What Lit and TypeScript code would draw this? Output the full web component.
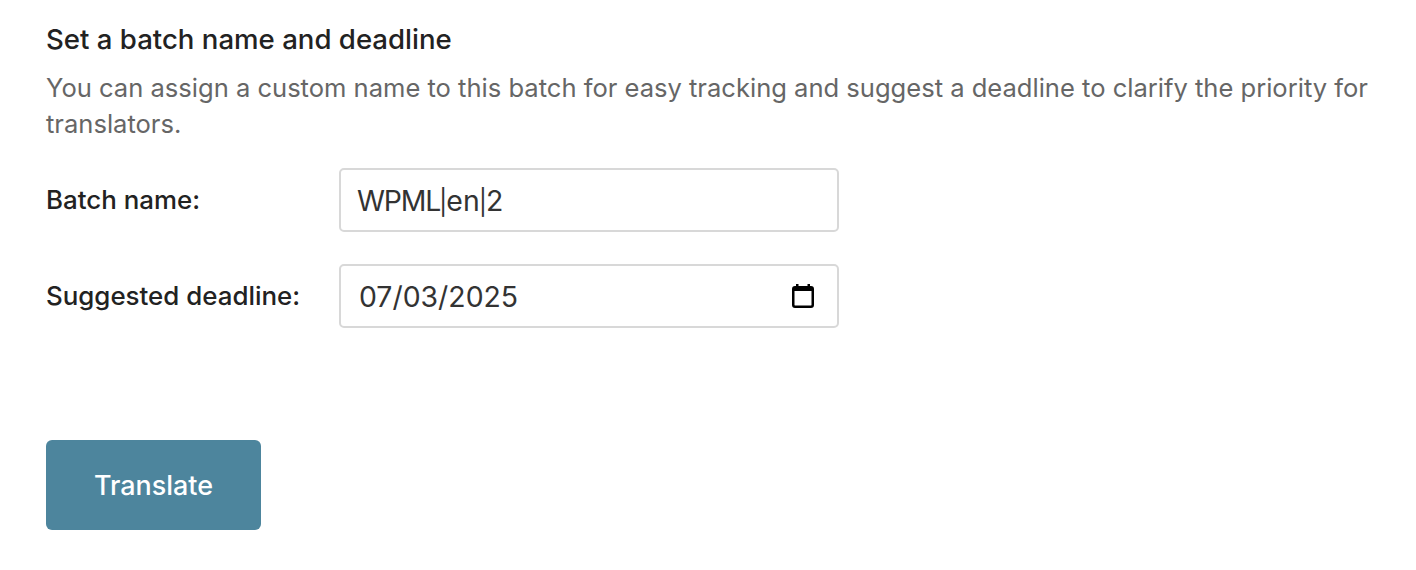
import { LitElement, html, css } from "lit";
import { customElement } from "lit/decorators.js";

@customElement("app-root")
export class AppRoot extends LitElement {
  static styles = css`
    :host {
      display: block;
      width: 1416px;
      height: 570px;
      background: #fff;
      box-sizing: border-box;
      padding: 24px 46px 0;
      font-family: Inter, "Liberation Sans", sans-serif;
      color: #222;
    }
    h2 {
      margin: 0;
      font-size: 27.6px;
      line-height: 30px;
      font-weight: 500;
      color: #222;
    }
    .desc {
      margin: 16px 0 0;
      font-size: 25.55px;
      line-height: 36px;
      color: #666;
    }
    .rows {
      display: grid;
      grid-template-columns: 293px 500px;
      row-gap: 32px;
      margin-top: 26px;
      align-items: center;
    }
    label {
      font-size: 25.9px;
      font-weight: 500;
      color: #222;
      padding-bottom: 2px;
    }
    .field {
      box-sizing: border-box;
      height: 64px;
      border: 2px solid #d8d8d8;
      border-radius: 5px;
      display: flex;
      align-items: center;
      justify-content: space-between;
      padding: 0 23px 0 18px;
      font-size: 28.4px;
      color: #333;
    }
    .name { margin-left: -2px; }
    .caps { letter-spacing: -1.2px; }
    .pipe { margin: 0 -1px; font-size: 25px; }
    svg {
      width: 22px;
      height: 24px;
      display: block;
    }
    button {
      display: block;
      margin-top: 112px;
      width: 215px;
      height: 90px;
      border: 0;
      border-radius: 6px;
      background: #4d859d;
      color: #fff;
      font: 500 26.9px Inter, "Liberation Sans", sans-serif;
    }
  `;
  render() {
    return html`
      <h2>Set a batch name and deadline</h2>
      <p class="desc">You can assign a custom name to this batch for easy tracking and suggest a deadline to clarify the priority for translators.</p>
      <div class="rows">
        <label>Batch name:</label>
        <div class="field"><span class="name"><span class="caps">WPML</span><span class="pipe">|</span>en<span class="pipe">|</span>2</span></div>
        <label>Suggested deadline:</label>
        <div class="field">
          <span>07/03/2025</span>
          <svg viewBox="0 0 22 24" fill="#000"><path fill-rule="evenodd" d="M4 2V0h2.5v2h9V0H18v2h1a3 3 0 0 1 3 3v16a3 3 0 0 1-3 3H3a3 3 0 0 1-3-3V5a3 3 0 0 1 3-3h1zM2.5 7v14c0 .3.2.5.5.5h16c.3 0 .5-.2.5-.5V7h-17z"/></svg>
        </div>
      </div>
      <button>Translate</button>
    `;
  }
}
